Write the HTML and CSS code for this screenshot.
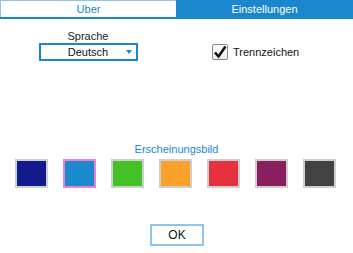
FILE: index.html
```html
<!DOCTYPE html>
<html>

<head>
    <title>Einstellungen</title>
    <meta charset="utf-8">
    <link rel="stylesheet" href="styles.css">
</head>

<body>
    <div class="tabs">
        <div class="tab">Uber</div>
        <div class="tab active">Einstellungen</div>
    </div>

    <div class="settings_row">
        <div class="settings_col lang_col">
            <div class="field_label">Sprache</div>
            <div class="select_box">
                <span class="select_text">Deutsch</span>
                <span class="select_arrow"></span>
            </div>
        </div>
        <div class="settings_col check_col">
            <div class="check_box">
                <svg width="14" height="14" viewBox="0 0 14 14">
                    <path d="M2 7.5 L5.5 11.5 L12.5 1.5" fill="none" stroke="#111" stroke-width="2.6" />
                </svg>
            </div>
            <span class="check_label">Trennzeichen</span>
        </div>
    </div>

    <div class="theme_container">
        <div class="theme_title">Erscheinungsbild</div>
        <div class="swatches">
            <div class="swatch" style="background: #121a8e"></div>
            <div class="swatch selected" style="background: #1a8acd"></div>
            <div class="swatch" style="background: #44c126"></div>
            <div class="swatch" style="background: #f9a12b"></div>
            <div class="swatch" style="background: #e8313f"></div>
            <div class="swatch" style="background: #881f5f"></div>
            <div class="swatch" style="background: #424242"></div>
        </div>
    </div>

    <div class="button_row">
        <button class="ok-button" type="button">OK</button>
    </div>
</body>

</html>
```

FILE: styles.css
```css
:root {
    --theme_color: #1a87cc;
    --light_blue: #8cc6ea;
    --text_color: #222222;
}

* {
    box-sizing: border-box;
}

body {
    margin: 0px;
    width: 353px;
    height: 253px;
    background: white;
    color: var(--text_color);
    font-family: "Liberation Sans", Arial, sans-serif;
    font-size: 11px;
    overflow: hidden;
}

.tabs {
    display: flex;
    height: 19px;
    border-bottom: 2px solid var(--theme_color);
}

.tab {
    flex: 0 0 176px;
    display: flex;
    justify-content: center;
    align-items: center;
    color: var(--theme_color);
    border-top: 1px solid var(--light_blue);
    border-left: 1px solid var(--light_blue);
}

.tab.active {
    flex: 1;
    background: var(--theme_color);
    color: white;
    border: none;
}

.settings_row {
    display: flex;
    margin-top: 11px;
}

.settings_col {
    flex: 0 0 176px;
}

.lang_col {
    display: flex;
    flex-direction: column;
    align-items: center;
}

.field_label {
    line-height: 13px;
    height: 13px;
}

.select_box {
    position: relative;
    width: 99px;
    height: 18px;
    border: 2px solid var(--theme_color);
    display: flex;
    justify-content: center;
    align-items: center;
}

.select_text {
    color: #111;
}

.select_arrow {
    position: absolute;
    right: 4px;
    top: 5px;
    width: 0;
    height: 0;
    border-left: 3px solid transparent;
    border-right: 3px solid transparent;
    border-top: 4px solid var(--theme_color);
}

.check_col {
    flex: 1;
    display: flex;
    align-items: center;
    padding-left: 36px;
    padding-top: 14px;
    height: 30px;
}

.check_box {
    width: 16px;
    height: 16px;
    border: 1px solid #8a8a8a;
    border-radius: 2px;
    background: linear-gradient(#ffffff, #ececec);
    display: flex;
    justify-content: center;
    align-items: center;
}

.check_label {
    margin-left: 5px;
    color: #111;
}

.theme_container {
    display: flex;
    flex-direction: column;
    align-items: center;
    margin-top: 82px;
}

.theme_title {
    color: var(--theme_color);
    line-height: 13px;
}

.swatches {
    display: flex;
    gap: 15px;
    margin-top: 3px;
    margin-right: 2px;
}

.swatch {
    width: 33px;
    height: 29px;
    border: 2px solid #cfcfcf;
}

.swatch.selected {
    border-color: #f27fd6;
}

.button_row {
    display: flex;
    justify-content: center;
    margin-top: 36px;
}

.ok-button {
    width: 54px;
    height: 22px;
    background: white;
    border: 2px solid var(--light_blue);
    font-family: "Liberation Sans", Arial, sans-serif;
    font-size: 12px;
    color: #111;
    padding: 0;
    margin-left: 1px;
}
```
